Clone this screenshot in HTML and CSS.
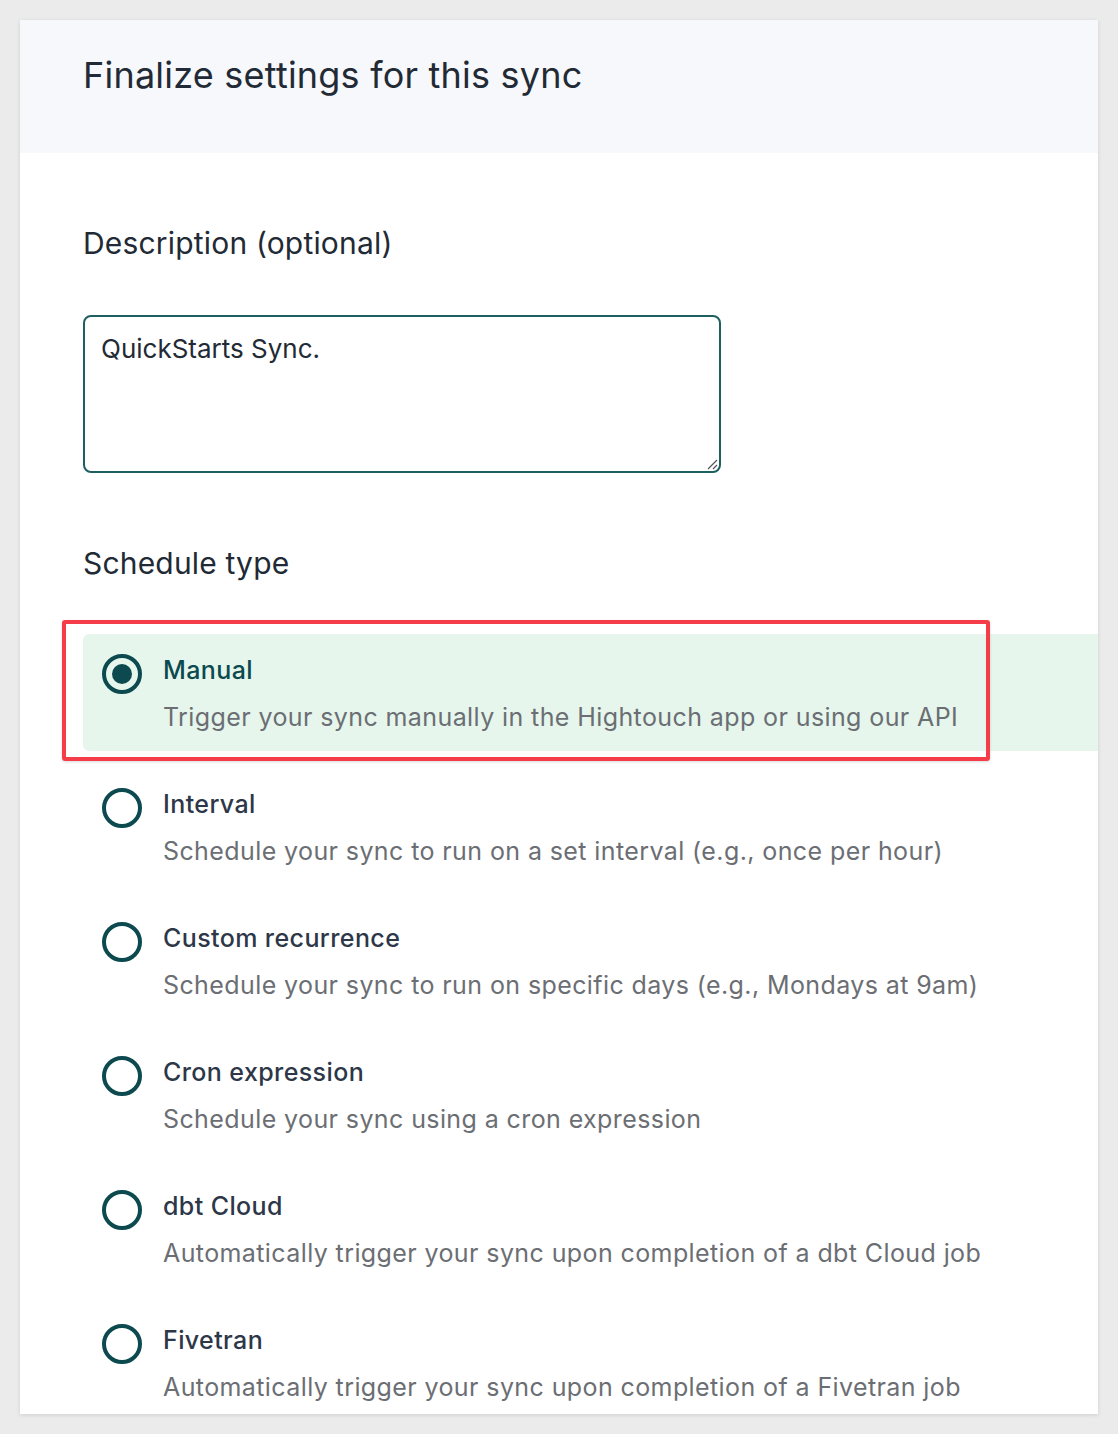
FILE: index.html
```html
<!DOCTYPE html>
<html>
<head>
<meta charset="utf-8">
<link rel="stylesheet" href="styles.css">
</head>
<body>
<div class="card">
  <div class="header">
    <h1 class="title">Finalize settings for this sync</h1>
  </div>
  <div class="content">
    <div class="field-label desc-label">Description (optional)</div>
    <div class="textarea">QuickStarts Sync.
      <svg class="grip" width="14" height="14" viewBox="0 0 14 14"><path d="M13 4 L4 13 M13 9 L9 13" stroke="#555" stroke-width="1.2" fill="none"/></svg>
    </div>
    <div class="field-label sched-label">Schedule type</div>
    <div class="options">
      <div class="option selected">
        <span class="radio"><span class="dot"></span></span>
        <div class="text">
          <div class="opt-label">Manual</div>
          <div class="opt-desc">Trigger your sync manually in the Hightouch app or using our API</div>
        </div>
      </div>
      <div class="option">
        <span class="radio"></span>
        <div class="text">
          <div class="opt-label">Interval</div>
          <div class="opt-desc">Schedule your sync to run on a set interval (e.g., once per hour)</div>
        </div>
      </div>
      <div class="option">
        <span class="radio"></span>
        <div class="text">
          <div class="opt-label">Custom recurrence</div>
          <div class="opt-desc">Schedule your sync to run on specific days (e.g., Mondays at 9am)</div>
        </div>
      </div>
      <div class="option">
        <span class="radio"></span>
        <div class="text">
          <div class="opt-label">Cron expression</div>
          <div class="opt-desc">Schedule your sync using a cron expression</div>
        </div>
      </div>
      <div class="option">
        <span class="radio"></span>
        <div class="text">
          <div class="opt-label">dbt Cloud</div>
          <div class="opt-desc">Automatically trigger your sync upon completion of a dbt Cloud job</div>
        </div>
      </div>
      <div class="option">
        <span class="radio"></span>
        <div class="text">
          <div class="opt-label">Fivetran</div>
          <div class="opt-desc">Automatically trigger your sync upon completion of a Fivetran job</div>
        </div>
      </div>
    </div>
  </div>
  <div class="highlight"></div>
</div>
</body>
</html>
```
FILE: styles.css
```css
html, body {
  margin: 0;
  padding: 0;
}
body {
  background: #ebebeb;
  font-family: Inter, "Noto Sans", sans-serif;
  padding: 20px;
}
.card {
  position: relative;
  background: #ffffff;
  width: 1078px;
  height: 1394px;
  overflow: hidden;
  box-shadow: 0 1px 4px rgba(0,0,0,0.12);
}
.header {
  background: #f7f8fb;
  height: 133px;
  padding-left: 63px;
  box-sizing: border-box;
  display: flex;
  align-items: flex-start;
}
.title {
  margin: 0;
  padding-top: 33px;
  font-size: 36px;
  line-height: 44px;
  font-weight: 400;
  letter-spacing: 0.22px;
  color: #222a35;
}
.content {
  padding-left: 63px;
}
.field-label {
  font-size: 30px;
  line-height: 36px;
  font-weight: 400;
  letter-spacing: 0.18px;
  color: #222a35;
}
.desc-label {
  margin-top: 72px;
}
.textarea {
  position: relative;
  margin-top: 54px;
  width: 638px;
  height: 158px;
  box-sizing: border-box;
  border: 2px solid #1e5f60;
  border-radius: 8px;
  padding: 16px 16px;
  font-size: 26px;
  line-height: 32px;
  color: #222a35;
}
.grip {
  position: absolute;
  right: 1px;
  bottom: 1px;
}
.sched-label {
  margin-top: 72px;
}
.options {
  margin-top: 53px;
  display: flex;
  flex-direction: column;
  gap: 17px;
}
.option {
  display: flex;
  align-items: flex-start;
  height: 117px;
  box-sizing: border-box;
  padding: 18px 0 0 19px;
  border-radius: 6px 0 0 6px;
}
.option.selected {
  background: #e6f6ec;
}
.radio {
  flex: none;
  width: 40px;
  height: 40px;
  box-sizing: border-box;
  border: 4px solid #0c4a4f;
  border-radius: 50%;
  margin-top: 2px;
  margin-right: 21px;
  display: flex;
  align-items: center;
  justify-content: center;
}
.dot {
  width: 20px;
  height: 20px;
  border-radius: 50%;
  background: #0c4a4f;
}
.opt-label {
  font-size: 25px;
  line-height: 36px;
  font-weight: 500;
  letter-spacing: 0.4px;
  color: #2d3748;
}
.selected .opt-label {
  color: #0b4a4e;
}
.opt-desc {
  margin-top: 11px;
  font-size: 25px;
  line-height: 36px;
  color: #6b6e73;
  letter-spacing: 0.4px;
}
.highlight {
  position: absolute;
  left: 42px;
  top: 600px;
  width: 928px;
  height: 141px;
  box-sizing: border-box;
  border: 4px solid #f53d4a;
  border-radius: 3px;
  box-shadow: 0 1px 3px rgba(0,0,0,0.15);
}
```
